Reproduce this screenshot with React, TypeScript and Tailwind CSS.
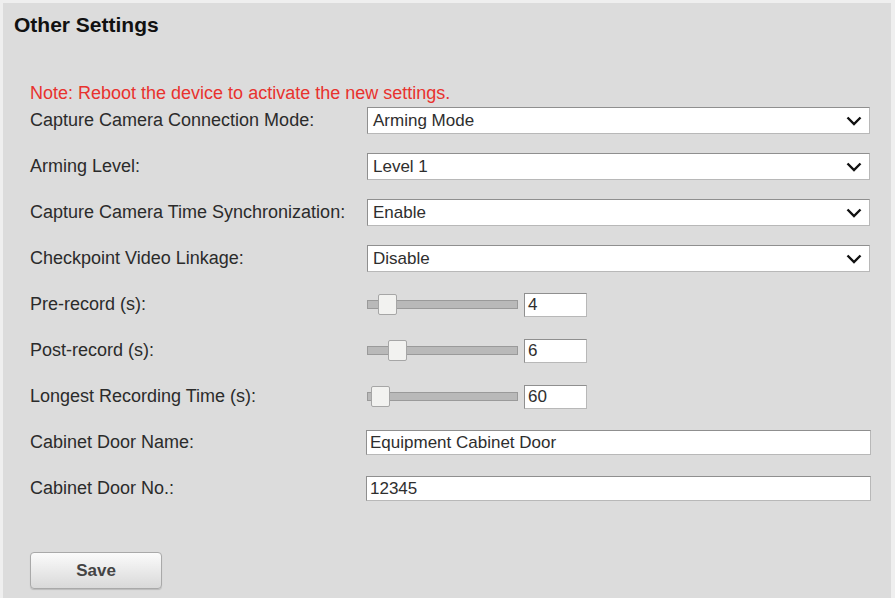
import React from 'react';

const font = { fontFamily: '"Liberation Sans", Arial, sans-serif' };

function Chevron() {
  return (
    <svg width="16" height="10" viewBox="0 0 16 10" className="shrink-0">
      <polyline points="1.5,1.5 8,8 14.5,1.5" fill="none" stroke="#111" strokeWidth="2.4" />
    </svg>
  );
}

function SelectBox({ value }: { value: string }) {
  return (
    <div className="w-[503px] h-[27px] ml-[1px] bg-white border border-[#8f8f8f] border-b-[#b8b8b8] border-r-[#b8b8b8] flex items-center justify-between pl-[5px] pr-[7px]">
      <span className="text-[17px] text-[#2e2e2e]">{value}</span>
      <Chevron />
    </div>
  );
}

function SliderBox({ value, offset }: { value: string; offset: number }) {
  return (
    <div className="flex items-center gap-[6px] h-[27px] ml-[1px]">
      <div className="relative w-[151px] h-[9px] bg-[#b9b9b9] border border-[#9a9a9a]">
        <div
          className="absolute top-[-7px] w-[19px] h-[21px] bg-[#f2f2f0] border border-[#a6a6a6] rounded-[2px]"
          style={{ left: offset }}
        />
      </div>
      <div className="w-[63px] h-[24px] bg-white border border-[#8f8f8f] border-b-[#b8b8b8] border-r-[#b8b8b8] flex items-center pl-[3px] text-[17px] text-[#2e2e2e]">
        {value}
      </div>
    </div>
  );
}

function TextBox({ value }: { value: string }) {
  return (
    <div className="w-[505px] h-[25px] mt-[1px] bg-white border border-[#8f8f8f] border-b-[#b8b8b8] border-r-[#b8b8b8] flex items-center pl-[3px] text-[17px] text-[#2e2e2e]">
      {value}
    </div>
  );
}

const rows: { label: string; control: React.ReactNode }[] = [
  { label: 'Capture Camera Connection Mode:', control: <SelectBox value="Arming Mode" /> },
  { label: 'Arming Level:', control: <SelectBox value="Level 1" /> },
  { label: 'Capture Camera Time Synchronization:', control: <SelectBox value="Enable" /> },
  { label: 'Checkpoint Video Linkage:', control: <SelectBox value="Disable" /> },
  { label: 'Pre-record (s):', control: <SliderBox value="4" offset={10} /> },
  { label: 'Post-record (s):', control: <SliderBox value="6" offset={20} /> },
  { label: 'Longest Recording Time (s):', control: <SliderBox value="60" offset={3} /> },
  { label: 'Cabinet Door Name:', control: <TextBox value="Equipment Cabinet Door" /> },
  { label: 'Cabinet Door No.:', control: <TextBox value="12345" /> },
];

export default function App() {
  return (
    <div className="w-[895px] h-[598px] bg-[#efefef] pl-[3px] pt-[3px] pr-[4px]" style={font}>
      <div className="h-full bg-[#dcdcdc] pl-[11px] pt-[10px]">
        <h2 className="text-[21px] leading-[24px] font-bold text-[#111]">Other Settings</h2>

        <div className="pl-[16px] mt-[45px]">
          <p className="text-[18px] leading-[22px] text-[#e8322e]">
            Note: Reboot the device to activate the new settings.
          </p>

          <div className="flex flex-col">
            {rows.map((row) => (
              <div key={row.label} className="h-[46px] flex items-start pt-[3px]">
                <div className="w-[336px] h-[27px] flex items-center text-[18px] text-[#2b2b2b] shrink-0">
                  {row.label}
                </div>
                {row.control}
              </div>
            ))}
          </div>

          <button className="mt-[34px] w-[132px] h-[37px] rounded-[4px] border border-[#a9a9a9] bg-gradient-to-b from-[#fbfbfb] to-[#d9d9d9] shadow-[0_1px_1px_rgba(0,0,0,0.15)] text-[17px] font-bold text-[#444]">
            Save
          </button>
        </div>
      </div>
    </div>
  );
}
